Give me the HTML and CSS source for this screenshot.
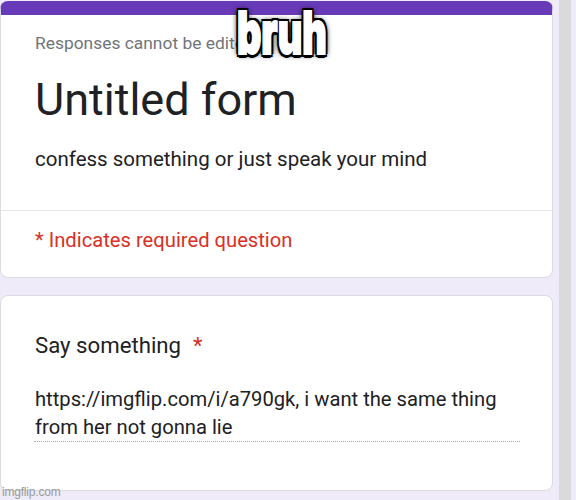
FILE: index.html
```html
<!DOCTYPE html>
<html lang="en">
<head>
<meta charset="utf-8">
<title>Untitled form</title>
<link rel="stylesheet" href="styles.css">
</head>
<body>
<div class="screen">
  <main class="form">
    <section class="card card-head">
      <div class="head-top">
        <p class="note">Responses cannot be edited</p>
        <h1 class="title">Untitled form</h1>
        <p class="desc">confess something or just speak your mind</p>
      </div>
      <div class="head-bottom">
        <p class="required">* Indicates required question</p>
      </div>
    </section>
    <section class="card card-question">
      <h2 class="question">Say something<span class="star">*</span></h2>
      <div class="answer">https://imgflip.com/i/a790gk, i want the same thing from her not gonna lie</div>
    </section>
  </main>
  <div class="gutter"></div>
  <div class="scrollbar"></div>
</div>
<div class="meme">bruh</div>
<div class="watermark">imgflip.com</div>
</body>
</html>
```
FILE: styles.css
```css
html, body {
  margin: 0;
  padding: 0;
  height: 100%;
  overflow: hidden;
}
body {
  background: #f0ebf8;
  font-family: Roboto, "Noto Sans", "Liberation Sans", sans-serif;
  color: #202124;
  position: relative;
}
.screen {
  display: flex;
  height: 100%;
}
.form {
  width: 553px;
  flex: none;
  display: flex;
  flex-direction: column;
  gap: 17.5px;
  padding-top: 1px;
}
.gutter {
  width: 6px;
  flex: none;
}
.scrollbar {
  width: 12px;
  flex: none;
  background: #dadadd;
}
.card {
  background: #fff;
  border: 1px solid #dadce0;
  border-radius: 8px;
  box-sizing: border-box;
}
.card-head {
  border-top: 14px solid #673ab7;
}
.head-top {
  padding: 18px 24px 38px 34px;
  border-bottom: 1px solid #e4e4ea;
}
.note {
  margin: 0;
  font-size: 17.4px;
  line-height: 20px;
  color: #70757a;
}
.title {
  margin: 20px 0 0;
  font-size: 45px;
  line-height: 54px;
  font-weight: 400;
  color: #202124;
}
.desc {
  margin: 19px 0 0;
  font-size: 20.5px;
  line-height: 26px;
  color: #202124;
}
.head-bottom {
  padding: 15.5px 24px 24px 34px;
}
.required {
  margin: 0;
  font-size: 20.2px;
  line-height: 26px;
  color: #d93025;
}
.card-question {
  padding: 35px 24px 48px 34px;
}
.question {
  margin: 0;
  font-size: 22.2px;
  line-height: 28px;
  font-weight: 400;
  color: #202124;
}
.star {
  margin-left: 12px;
  color: #d93025;
}
.answer {
  width: 486px;
  box-sizing: border-box;
  margin: 26px 0 0 -1px;
  padding: 0 0 0 1px;
  font-size: 20.2px;
  line-height: 28px;
  color: #202124;
  border-bottom: 1px dotted #a8a8a8;
}
.meme {
  position: absolute;
  left: 237px;
  top: 5px;
  font-family: Inter, Lato, "DejaVu Sans", sans-serif;
  font-weight: 900;
  font-size: 59px;
  line-height: 56px;
  letter-spacing: 0;
  color: #fff;
  -webkit-text-stroke: 2px #fff;
  transform: scaleX(0.64);
  transform-origin: left top;
  text-shadow: -3px -3px 0 #000, 3px -3px 0 #000, -3px 3px 0 #000, 3px 3px 0 #000,
    0 -3px 0 #000, 0 4px 0 #000, -4px 0 0 #000, 4px 0 0 #000, 0 0 8px #000, 0 0 8px #000;
}
.watermark {
  position: absolute;
  left: 2px;
  top: 485px;
  font-family: "Liberation Sans", Arial, sans-serif;
  font-size: 12px;
  line-height: 14px;
  color: #9a9a9a;
  letter-spacing: -0.2px;
}
```
